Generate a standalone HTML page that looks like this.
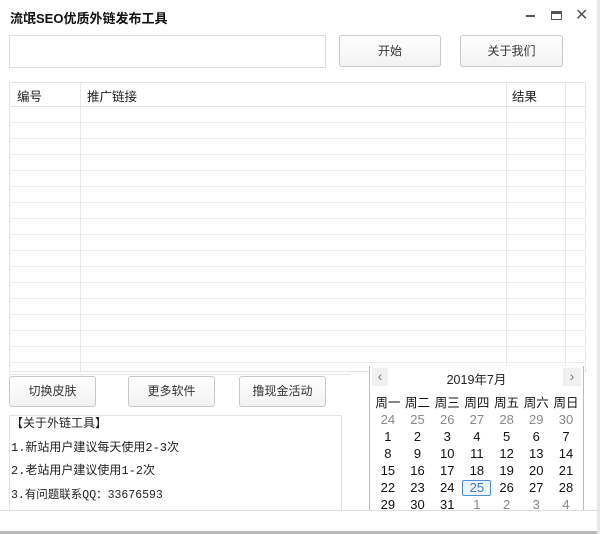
<!DOCTYPE html>
<html><head><meta charset="utf-8"><style>
*{margin:0;padding:0;box-sizing:border-box}
body{width:600px;height:534px;background:#fff;position:relative;overflow:hidden;font-family:"Liberation Sans","Microsoft YaHei","Noto Sans CJK SC",sans-serif;font-size:12px;color:#222}
.a{position:absolute}
.btn{position:absolute;border:1px solid #c8c8c8;border-radius:3px;background:linear-gradient(#fff,#f2f2f2);text-align:center;font-size:12px;color:#333}
.grid{position:absolute;left:9px;top:82px;width:577px;height:290px;border:1px solid #e4e4e4;overflow:hidden;
background-image:repeating-linear-gradient(to bottom,transparent 0,transparent 15px,#ececec 15px,#ececec 16px);background-position:0 24px;background-repeat:repeat}
.hdr{position:absolute;left:0;top:0;width:100%;height:24px;background:#fff;border-bottom:1px solid #e4e4e4}
.vl{position:absolute;top:0;height:100%;width:1px;background:#e8e8e8}
.cal td{width:29.7px;height:17px;text-align:center;font-size:13px;color:#111;padding:0}
.cal .g{color:#888}
.cal th{font-weight:normal;font-size:12.5px;height:20px;color:#111}
</style></head><body>
<div class="a" style="left:10px;top:8px;font-weight:bold;font-size:13px;color:#111">流氓SEO优质外链发布工具</div>
<div class="a" style="left:526px;top:15px;width:9px;height:2px;background:#555"></div>
<div class="a" style="left:551px;top:11px;width:11px;height:9px;border:1.5px solid #555;border-top-width:3px"></div>
<div class="a" style="left:575px;top:5px;font-size:16px;color:#555">✕</div>

<div class="a" style="left:9px;top:35px;width:317px;height:33px;border:1px solid #ddd"></div>
<div class="btn" style="left:339px;top:35px;width:102px;height:32px;line-height:30px">开始</div>
<div class="btn" style="left:460px;top:35px;width:103px;height:32px;line-height:30px">关于我们</div>

<div class="grid">
<div class="hdr"></div>
<div class="vl" style="left:70px"></div>
<div class="vl" style="left:496px"></div>
<div class="vl" style="left:555px"></div>
<div class="a" style="left:7px;top:3px;font-size:12.5px">编号</div>
<div class="a" style="left:77px;top:3px;font-size:12.5px">推广链接</div>
<div class="a" style="left:502px;top:3px;font-size:12.5px">结果</div>
</div>

<div class="a" style="left:0;top:374px;width:600px;height:160px;background:#fff"></div>
<div class="a" style="left:9px;top:374px;width:341px;height:1px;background:#e4e4e4"></div>
<div class="btn" style="left:9px;top:376px;width:87px;height:31px;line-height:29px">切换皮肤</div>
<div class="btn" style="left:128px;top:376px;width:87px;height:31px;line-height:29px">更多软件</div>
<div class="btn" style="left:239px;top:376px;width:87px;height:31px;line-height:29px">撸现金活动</div>

<div class="a" style="left:9px;top:415px;width:333px;height:96px;border:1px solid #e2e2e2;border-bottom:none;font-family:'Liberation Mono','Noto Sans CJK SC',monospace;font-size:12px;line-height:23.7px;padding-left:1px">
<div style="margin-top:-3px">【关于外链工具】</div>
<div>1.新站用户建议每天使用2-3次</div>
<div>2.老站用户建议使用1-2次</div>
<div style="font-size:11.5px">3.有问题联系QQ：33676593</div>
</div>

<div class="a" style="left:369px;top:366px;width:215px;height:146px;border-left:1px solid #bbb;border-right:1px solid #bbb;background:#fff">
<div class="a" style="left:2px;top:2px;width:16px;height:18px;background:#f0f0f0;color:#777;text-align:center;line-height:17px;font-size:14px">‹</div>
<div class="a" style="left:193px;top:2px;width:18px;height:18px;background:#f0f0f0;color:#777;text-align:center;line-height:17px;font-size:14px">›</div>
<div class="a" style="left:0;width:213px;top:3px;text-align:center;font-size:12.5px">2019年7月</div>
<table class="cal a" style="left:3px;top:25px;border-collapse:collapse">
<tr><th>周一</th><th>周二</th><th>周三</th><th>周四</th><th>周五</th><th>周六</th><th>周日</th></tr>
<tr class="g"><td class="g">24</td><td class="g">25</td><td class="g">26</td><td class="g">27</td><td class="g">28</td><td class="g">29</td><td class="g">30</td></tr>
<tr><td>1</td><td>2</td><td>3</td><td>4</td><td>5</td><td>6</td><td>7</td></tr>
<tr><td>8</td><td>9</td><td>10</td><td>11</td><td>12</td><td>13</td><td>14</td></tr>
<tr><td>15</td><td>16</td><td>17</td><td>18</td><td>19</td><td>20</td><td>21</td></tr>
<tr><td>22</td><td>23</td><td>24</td><td><span style="display:inline-block;width:29px;height:16px;border:1px solid #4a90d9;border-radius:2px;color:#3a7cc9;background:#eef4fb;line-height:14px">25</span></td><td>26</td><td>27</td><td>28</td></tr>
<tr><td>29</td><td>30</td><td>31</td><td class="g">1</td><td class="g">2</td><td class="g">3</td><td class="g">4</td></tr>
</table>
</div>

<div class="a" style="left:0;top:510px;width:600px;height:24px;background:#fff;border-top:1px solid #ddd"></div>
<div class="a" style="left:0;top:531px;width:600px;height:3px;background:#bbb"></div>
<div class="a" style="left:597px;top:0;width:3px;height:534px;background:#e8e8e8"></div>
</body></html>
